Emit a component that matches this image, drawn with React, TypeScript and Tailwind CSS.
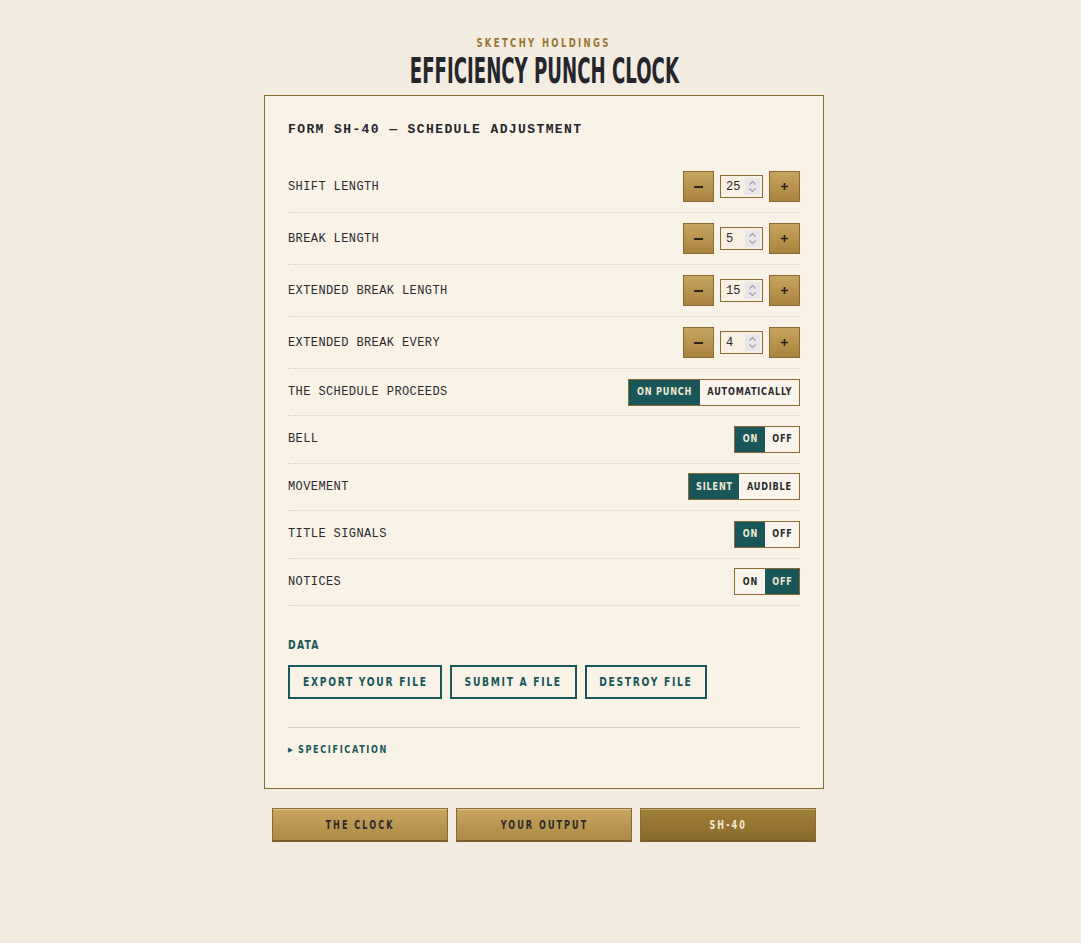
import React from "react";

const cond = "font-['DejaVu_Sans_Condensed','DejaVu_Sans',sans-serif] font-stretch-condensed font-bold";
const mono = "font-['Liberation_Mono','Courier_New',monospace]";

function Sq({ children, cls }: { children: React.ReactNode; cls: string }) {
  return <span className={`inline-block whitespace-nowrap ${cls}`}>{children}</span>;
}

function Stepper({ value }: { value: string }) {
  return (
    <div className="flex items-center gap-[6px]">
      <button className="w-[31px] h-[31px] border border-[#8b6a33] bg-linear-to-b from-[#c7a45e] to-[#a8843f] flex items-center justify-center">
        <span className="block w-[9px] h-[2px] bg-[#2a2420]" />
      </button>
      <div className="w-[43px] h-[23px] border border-[#8b6a33] bg-[#f7f0e3] flex items-center justify-between pl-[5px] pr-[2px]">
        <span className={`${mono} text-[12px] text-[#2a2a2e]`}>{value}</span>
        <span className="w-[15px] h-[17px] bg-[#e9e6e8] flex items-center justify-center">
          <svg width="9" height="13" viewBox="0 0 9 13" fill="none" stroke="#9b98a6" strokeWidth="1.2">
            <path d="M1.5 4.5 L4.5 1.5 L7.5 4.5" />
            <path d="M1.5 8.5 L4.5 11.5 L7.5 8.5" />
          </svg>
        </span>
      </div>
      <button className="w-[31px] h-[31px] border border-[#8b6a33] bg-linear-to-b from-[#c7a45e] to-[#a8843f] flex items-center justify-center">
        <svg width="7" height="7" viewBox="0 0 7 7" stroke="#2a2420" strokeWidth="1.6">
          <path d="M3.5 0 V7 M0 3.5 H7" />
        </svg>
      </button>
    </div>
  );
}

function Toggle({ options, active }: { options: [string, string][]; active: number }) {
  return (
    <div className="flex h-[27px] border border-[#8b6a33] bg-[#faf5ec]">
      {options.map(([o, w], i) => (
        <span
          key={o}
          className={`${cond} ${w} text-[11px] tracking-[1px] flex items-center justify-center ${
            i === active ? "bg-[#18565a] text-[#f1e8d2]" : "text-[#2a2a2e]"
          }`}
        >
          <Sq cls="scale-x-[0.82]">{o}</Sq>
        </span>
      ))}
    </div>
  );
}

function Row({ label, h, children }: { label: string; h: string; children: React.ReactNode }) {
  return (
    <div className={`flex items-center justify-between ${h} border-b border-dotted border-[#d9d2c4]`}>
      <span className={`${mono} text-[12px] tracking-[0.4px] text-[#2a2a2e]`}>{label}</span>
      {children}
    </div>
  );
}

export default function App() {
  const s = "h-[52px]";
  const t = "h-[47.5px]";
  const onoff = (a: number) => (
    <Toggle options={[["ON", "w-[30px]"], ["OFF", "w-[34px]"]]} active={a} />
  );
  return (
    <div className="min-h-[943px] bg-[#f3ece0] flex flex-col items-center pt-[37px] pl-[7px]">
      <div className={`${cond} text-[12px] tracking-[3px] text-[#9a7433] leading-[12px]`}>
        <Sq cls="scale-x-[0.785]">SKETCHY HOLDINGS</Sq>
      </div>
      <h1 className={`${cond} text-[36px] leading-[36px] text-[#26252b] mt-[4px]`}>
        <Sq cls="scale-x-[0.56]">EFFICIENCY PUNCH CLOCK</Sq>
      </h1>
      <div className="mt-[6px] w-[560px] border border-[#8b6a33] bg-[#f9f2e7] px-[23px] pt-[24px] pb-[31px]">
        <div className={`${mono} font-bold text-[13px] tracking-[1.4px] text-[#26252b] leading-[20px]`}>
          FORM SH-40 — SCHEDULE ADJUSTMENT
        </div>
        <div className="mt-[21px]">
          <Row h={s} label="SHIFT LENGTH"><Stepper value="25" /></Row>
          <Row h={s} label="BREAK LENGTH"><Stepper value="5" /></Row>
          <Row h={s} label="EXTENDED BREAK LENGTH"><Stepper value="15" /></Row>
          <Row h={s} label="EXTENDED BREAK EVERY"><Stepper value="4" /></Row>
          <Row h="h-[47px]" label="THE SCHEDULE PROCEEDS">
            <Toggle options={[["ON PUNCH", "w-[71px]"], ["AUTOMATICALLY", "w-[99px]"]]} active={0} />
          </Row>
          <Row h={t} label="BELL">{onoff(0)}</Row>
          <Row h={t} label="MOVEMENT">
            <Toggle options={[["SILENT", "w-[50px]"], ["AUDIBLE", "w-[60px]"]]} active={0} />
          </Row>
          <Row h={t} label="TITLE SIGNALS">{onoff(0)}</Row>
          <Row h={t} label="NOTICES">{onoff(1)}</Row>
        </div>
        <div className={`${cond} mt-[32px] text-[12px] tracking-[1.5px] text-[#18565a] leading-[14px]`}>
          <Sq cls="scale-x-[0.85] origin-left">DATA</Sq>
        </div>
        <div className="mt-[13px] flex gap-[8px]">
          {[
            ["EXPORT YOUR FILE", "w-[154px]"],
            ["SUBMIT A FILE", "w-[127px]"],
            ["DESTROY FILE", "w-[122px]"],
          ].map(([x, w]) => (
            <button
              key={x}
              className={`${cond} ${w} h-[34px] flex items-center justify-center border-2 border-[#18565a] text-[#18565a] text-[12px] tracking-[2px]`}
            >
              <Sq cls="scale-x-[0.85]">{x}</Sq>
            </button>
          ))}
        </div>
        <div className="mt-[28px] border-t border-[#d2cabd]" />
        <div className={`${cond} mt-[15px] flex items-center gap-[3px] text-[#18565a] text-[11px] tracking-[2px] leading-[14px]`}>
          <span className="text-[7px] font-['DejaVu_Sans']">▶</span>
          <Sq cls="scale-x-[0.82] origin-left">SPECIFICATION</Sq>
        </div>
      </div>
      <div className="mt-[19px] w-[544px] grid grid-cols-3 gap-[8px]">
        {["THE CLOCK", "YOUR OUTPUT", "SH-40"].map((x, i) => (
          <button
            key={x}
            className={`${cond} h-[34px] flex items-center justify-center border border-[#8b6a33] border-b-[2px] border-b-[#7a5a27] shadow-[inset_0_1px_0_rgba(255,255,255,0.35)] text-[13px] tracking-[3px] ${
              i === 2
                ? "bg-linear-to-b from-[#a07f38] to-[#8b6b2e] text-[#f3e9d2]"
                : "bg-linear-to-b from-[#c8a55f] to-[#ad8a45] text-[#2b2a2e]"
            }`}
          >
            <Sq cls="scale-x-[0.69]">{x}</Sq>
          </button>
        ))}
      </div>
    </div>
  );
}
